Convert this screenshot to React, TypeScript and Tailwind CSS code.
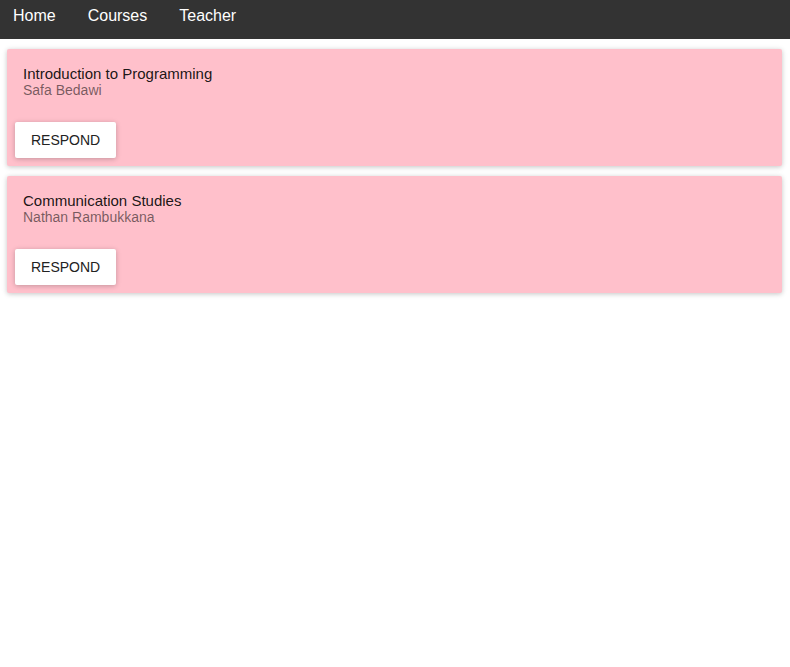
const courses = [
  { title: 'Introduction to Programming', teacher: 'Safa Bedawi' },
  { title: 'Communication Studies', teacher: 'Nathan Rambukkana' },
]

function CourseCard({ title, teacher }: { title: string; teacher: string }) {
  return (
    <div className="rounded-[2px] bg-[#ffc0cb] shadow-[0_1px_6px_rgba(0,0,0,0.12),0_1px_4px_rgba(0,0,0,0.12)]">
      <div className="p-4">
        <div className="text-[15px] leading-[17px] text-black/90">{title}</div>
        <div className="text-[14px] leading-[16px] text-black/55">{teacher}</div>
      </div>
      <div className="p-2">
        <button className="h-9 min-w-[88px] rounded-[2px] bg-white px-4 text-[14px] leading-[36px] text-[#222] shadow-[0_1px_6px_rgba(0,0,0,0.12),0_1px_4px_rgba(0,0,0,0.12)]">
          RESPOND
        </button>
      </div>
    </div>
  )
}

export default function App() {
  return (
    <div className="min-h-[667px] bg-white font-['Liberation_Sans',Arial,sans-serif]">
      <nav className="flex h-[39px] items-start gap-[32px] bg-[#333] pl-[13px] pt-[7px] text-[16px] leading-[18px] text-white">
        <a>Home</a>
        <a>Courses</a>
        <a>Teacher</a>
      </nav>
      <div className="flex flex-col gap-[10px] pl-[7px] pr-2 pt-[10px]">
        {courses.map((c) => (
          <CourseCard key={c.title} title={c.title} teacher={c.teacher} />
        ))}
      </div>
    </div>
  )
}
